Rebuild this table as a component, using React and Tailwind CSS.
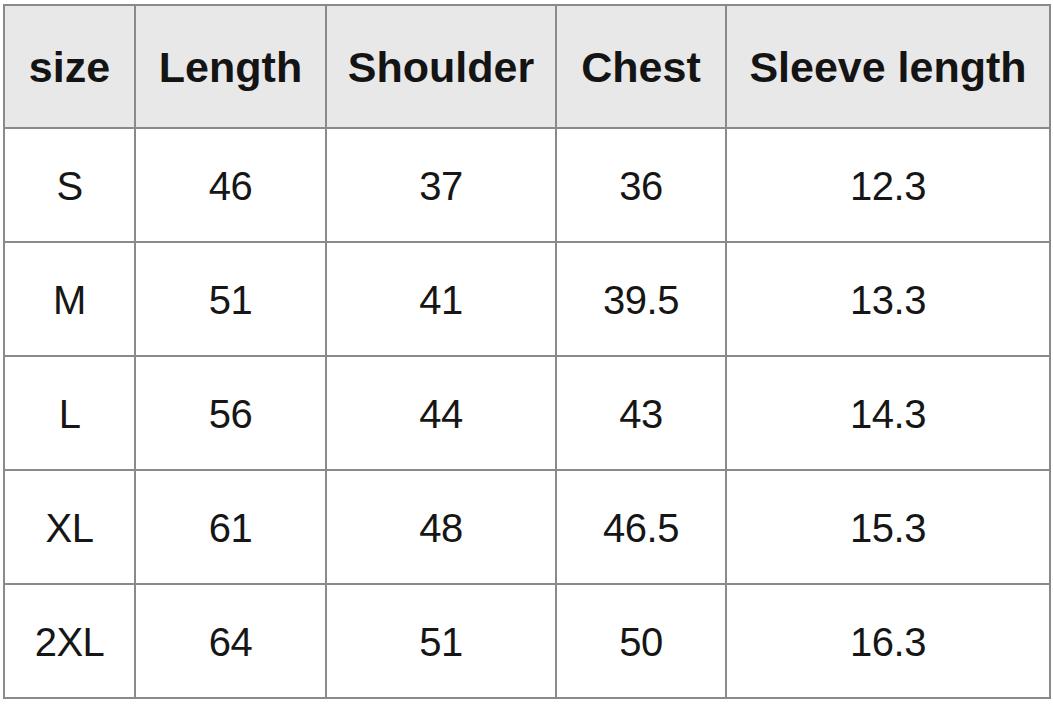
export default function App() {
  const headers = ["size", "Length", "Shoulder", "Chest", "Sleeve length"];
  const rows = [
    ["S", "46", "37", "36", "12.3"],
    ["M", "51", "41", "39.5", "13.3"],
    ["L", "56", "44", "43", "14.3"],
    ["XL", "61", "48", "46.5", "15.3"],
    ["2XL", "64", "51", "50", "16.3"],
  ];
  return (
    <div className="w-[1053px] h-[704px] bg-white pl-[3px] pt-[4px]" style={{ fontFamily: '"Liberation Sans", Arial, sans-serif' }}>
      <div className="w-[1048px] grid grid-cols-[129px_189px_228px_168px_322px] grid-rows-[121px_repeat(5,112px)] gap-[2px] p-[2px] bg-[#8a8a8a]">
        {headers.map((h) => (
          <div key={h} className="bg-[#e8e8e8] flex items-center justify-center text-[43px] font-bold text-[#141414] pt-[2px]">
            {h}
          </div>
        ))}
        {rows.map((r, i) =>
          r.map((c, j) => (
            <div key={i + "-" + j} className="bg-white flex items-center justify-center text-[40px] text-[#161616] tracking-[-0.5px] pt-[2px]">
              {c}
            </div>
          ))
        )}
      </div>
    </div>
  );
}
